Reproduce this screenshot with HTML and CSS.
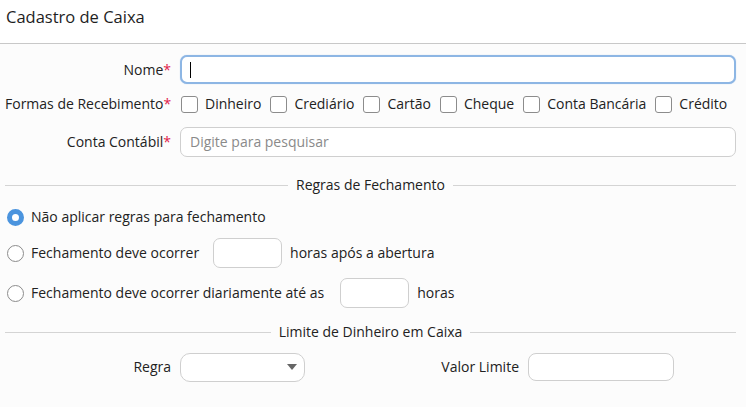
FILE: index.html
```html
<!DOCTYPE html>
<html lang="pt">
<head>
<meta charset="utf-8">
<title>Cadastro de Caixa</title>
<link rel="stylesheet" href="styles.css">
</head>
<body>
<div class="header"><span class="title">Cadastro de Caixa</span></div>
<div class="form">
  <div class="row row-nome">
    <div class="label">Nome<span class="req">*</span></div>
    <div class="input focused"><span class="caret"></span></div>
  </div>
  <div class="row row-formas">
    <div class="label">Formas de Recebimento<span class="req">*</span></div>
    <div class="checks">
      <span class="check"><span class="box"></span>Dinheiro</span>
      <span class="check"><span class="box"></span>Crediário</span>
      <span class="check"><span class="box"></span>Cartão</span>
      <span class="check"><span class="box"></span>Cheque</span>
      <span class="check"><span class="box"></span>Conta Bancária</span>
      <span class="check"><span class="box"></span>Crédito</span>
    </div>
  </div>
  <div class="row row-conta">
    <div class="label">Conta Contábil<span class="req">*</span></div>
    <div class="input"><span class="placeholder">Digite para pesquisar</span></div>
  </div>

  <div class="divider div-regras"><span class="line"></span><span class="dtext">Regras de Fechamento</span><span class="line"></span></div>

  <div class="radio-row r1"><span class="radio checked"></span>Não aplicar regras para fechamento</div>
  <div class="radio-row r2"><span class="radio"></span>Fechamento deve ocorrer<span class="small-input si1"></span>horas após a abertura</div>
  <div class="radio-row r3"><span class="radio"></span>Fechamento deve ocorrer diariamente até as<span class="small-input si2"></span>horas</div>

  <div class="divider div-limite"><span class="line"></span><span class="dtext">Limite de Dinheiro em Caixa</span><span class="line"></span></div>

  <div class="limit-row">
    <span class="llabel regra">Regra</span>
    <span class="select"><span class="arrow"></span></span>
    <span class="llabel valor">Valor Limite</span>
    <span class="vinput"></span>
  </div>
</div>
</body>
</html>
```
FILE: styles.css
```css
* { box-sizing: border-box; }
html, body { margin: 0; padding: 0; }
body {
  width: 746px;
  height: 407px;
  overflow: hidden;
  background: #fcfcfc;
  font-family: "Open Sans", "Noto Sans", sans-serif;
  font-size: 14px;
  line-height: 20px;
  color: #222;
}
.header {
  height: 44px;
  background: #fff;
  border-bottom: 1px solid #c8c8c8;
  padding: 5px 0 0 6px;
}
.title { font-size: 16.5px; line-height: 24px; color: #1e1e1e; }
.form { padding: 0 10px 0 5px; }
.row { display: flex; align-items: center; }
.label { width: 166px; text-align: right; flex: none; margin-right: 9px; white-space: nowrap; }
.req { color: #e0204a; }
.row-nome { margin-top: 11px; height: 29px; }
.row-formas { margin-top: 6px; height: 28px; }
.row-conta { margin-top: 9px; height: 30px; }
.input {
  flex: 1;
  height: 30px;
  border: 1px solid #cfcfcf;
  border-radius: 7px;
  background: #fff;
  display: flex;
  align-items: center;
  padding-left: 9px;
}
.input.focused {
  height: 29px;
  border: 2.5px solid #8db6e4;
  padding-left: 8px;
  box-shadow: 0 0 1px #a9c8ec;
}
.caret { width: 1px; height: 16px; background: #000; }
.placeholder { color: #8a8a8a; }
.checks { display: flex; align-items: center; margin-left: 1px; }
.check { display: flex; align-items: center; margin-right: 9px; white-space: nowrap; }
.box {
  width: 17px; height: 17px;
  border: 1px solid #8c8c8c;
  border-radius: 3px;
  background: #fff;
  margin-right: 7px;
}
.divider { display: flex; align-items: center; height: 20px; }
.div-regras { margin-top: 18px; }
.div-limite { margin-top: 14px; }
.line { flex: 1; height: 1px; background: #d4d4d4; }
.dtext { padding: 0 8px; white-space: nowrap; }
.radio-row { display: flex; align-items: center; white-space: nowrap; margin-left: 2px; }
.r1 { margin-top: 12px; height: 20px; }
.r2 { margin-top: 11px; height: 30px; }
.r3 { margin-top: 10px; height: 30px; }
.radio {
  width: 17px; height: 17px; border-radius: 50%;
  border: 1px solid #8c8c8c;
  background: #fff;
  margin-right: 7px;
  flex: none;
}
.radio.checked {
  border: 5.5px solid #4b94de;
  background: #fff;
}
.small-input {
  width: 69px; height: 30px;
  border: 1px solid #cfcfcf;
  border-radius: 7px;
  background: #fff;
  margin: 0 8px 0 14px;
}
.si2 { margin-left: 16px; }
.limit-row { display: flex; align-items: center; margin-top: 10px; height: 30px; }
.llabel { white-space: nowrap; text-align: right; flex: none; }
.regra { width: 166px; margin-right: 9px; }
.select {
  width: 125px; height: 29px;
  border: 1px solid #cfcfcf;
  border-radius: 10px;
  background: #fff;
  display: flex; align-items: center; justify-content: flex-end;
  padding-right: 7px;
}
.arrow {
  width: 0; height: 0;
  border-left: 5.5px solid transparent;
  border-right: 5.5px solid transparent;
  border-top: 6px solid #666;
}
.valor { width: 214px; margin-right: 9px; }
.vinput {
  width: 146px; height: 28px;
  border: 1px solid #cfcfcf;
  border-radius: 8px;
  background: #fff;
}
```
